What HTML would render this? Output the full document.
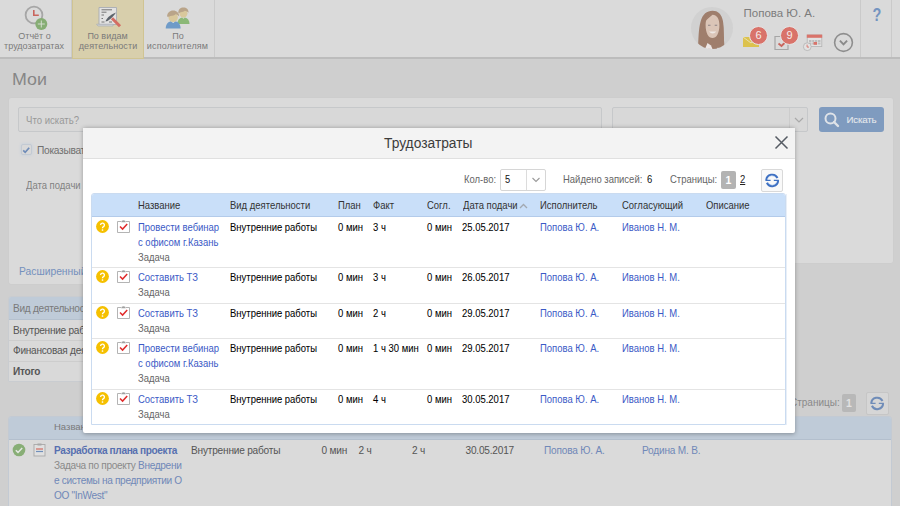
<!DOCTYPE html>
<html><head><meta charset="utf-8">
<style>
*{margin:0;padding:0;box-sizing:border-box}
html,body{width:900px;height:506px;overflow:hidden}
body{background:#cfcfcf;font-family:"Liberation Sans",sans-serif;position:relative;color:#555}
.a{position:absolute;white-space:nowrap}
/* toolbar */
#tb{position:absolute;left:0;top:0;width:900px;height:57px;background:#dadada;border-bottom:2px solid #bcbcbc;height:59px}
.tab{position:absolute;top:0;height:57px;text-align:center;font-size:9px;line-height:10px;color:#7a7a7a}
.sep{position:absolute;top:0;width:1px;height:57px;background:#cacaca}
/* search panel */
#sp{position:absolute;left:8px;top:97px;width:886px;height:167px;background:#dadada;border:1px solid #cdcdcd;border-radius:3px}
.inp{position:absolute;background:#d8d8d8;border:1px solid #c6c8ca;border-radius:2px}
/* left table */
.lt{position:absolute;left:8px;width:80px;border:1px solid #c9ccd0;background:#d9d9d9;border-radius:3px 3px 0 0}
/* modal */
#modal{position:absolute;left:83px;top:128px;width:712px;height:305px;background:#fff;box-shadow:0 0.5px 4px rgba(0,0,0,.3);border-radius:2px}
#mh{position:absolute;left:0;top:0;width:712px;height:31px;background:#f3f3f3;border-bottom:1px solid #e0e0e0}
.m{position:absolute;white-space:nowrap;font-size:10.2px;line-height:15px;transform:scaleX(0.93);transform-origin:0 0}
#tbl{position:absolute;left:8px;top:65px;width:695px;height:232px;border:1px solid #cadbf0;border-radius:3px 3px 0 0;overflow:hidden}
#th{position:absolute;left:0;top:0;width:693px;height:23px;background:#c9dff9;border-bottom:1px solid #b3cbea}
.row{position:absolute;left:0;width:692px;border-top:1px solid #e3e3e3}
.lnk{color:#3b5ac6}
.dk{color:#000;-webkit-text-stroke:0.05px #000}
.gr{color:#666}
</style></head><body>

<!-- ===== TOOLBAR ===== -->
<div id="tb">
  <div class="tab" style="left:0;width:71px">
    <svg class="a" style="left:22px;top:4px" width="28" height="28" viewBox="0 0 28 28">
      <circle cx="12" cy="11" r="8.4" fill="none" stroke="#a6a6a6" stroke-width="1.8"/>
      <path d="M11.8 6v5.2h5" fill="none" stroke="#c9655d" stroke-width="1.6"/>
      <circle cx="19.3" cy="20" r="6" fill="#86ad74"/>
      <path d="M19.3 16.5v7M15.8 20h7" stroke="#d4dccf" stroke-width="1"/>
    </svg>
    <div class="a" style="left:0;width:69px;top:31px;text-align:center">Отчёт о</div>
    <div class="a" style="left:0;width:68px;top:41px;text-align:center">трудозатратах</div>
  </div>
  <div class="sep" style="left:71px"></div>
  <div class="tab" style="left:72px;width:72px;height:59px;background:#d8cfac;border:1px solid #d0c492;border-top:none">
    <svg class="a" style="left:22px;top:3px" width="28" height="26" viewBox="0 0 28 26">
      <path d="M4 4.5h17.5v17H4z" fill="#e2e2e2" stroke="#a8adb4" stroke-width="0.9"/>
      <path d="M1.5 21.2h16.5v1.8H3z" fill="#d4d6d8" stroke="#a8adb4" stroke-width="0.7"/>
      <path d="M6.5 6.8h10.5M6.5 9.2h5M6.5 12h2.5M6.5 15.5h1.5M6.5 19h3M14 19h3" stroke="#6a6a6a" stroke-width="0.9"/>
      <path d="M10.5 18.5c1-3 4-6.5 10.5-9-1.5 2.5-4.5 6-8.5 8.5z" fill="#5c636b"/>
      <path d="M17 15.2l8 8" stroke="#d36d63" stroke-width="3"/>
    </svg>
    <div class="a" style="left:-1px;width:71px;top:31px;text-align:center">По видам</div>
    <div class="a" style="left:-0.5px;width:71px;top:41px;text-align:center;letter-spacing:0.1px">деятельности</div>
  </div>
  <div class="tab" style="left:144px;width:70px">
    <svg class="a" style="left:15px;top:2px" width="33" height="28" viewBox="0 0 35 30">
      <path d="M19.5 23.5c0-4 2-6.5 5-7h3c3 .5 5 3 5 7z" fill="#8bb877"/>
      <path d="M24.5 16.5l1.5 1.5 1.5-1.5z" fill="#e9e9e0"/>
      <ellipse cx="26" cy="12" rx="4.3" ry="4.6" fill="#d9c89c"/>
      <path d="M20.5 11.5c0-3.5 2.3-5.5 5.5-5.5s5.5 2 5.5 5.5c-1-1-2.5-1.8-4-2-.8 1-2.5 1.5-4.5 1.5-.8.5-1.5 1-2.5.5z" fill="#b9a489"/>
      <path d="M7 28.5c0-5 2.5-7.5 6-8h4c3.5.5 6 3 6 8z" fill="#6f9bc8"/>
      <path d="M12.5 20.5l2.5 2 2.5-2z" fill="#e9e9e0"/>
      <ellipse cx="15" cy="16.5" rx="5" ry="5" fill="#d9c89c"/>
      <path d="M8.5 15.5c0-4 2.8-6.5 6.5-6.5s6.5 2.5 6.5 6.5c-1-1.2-2.5-2-4-2.3-1 1.2-3 1.8-5.5 1.8-1 .6-2 1-3.5.5z" fill="#b9a489"/>
    </svg>
    <div class="a" style="left:-1px;width:70px;top:31px;text-align:center">По</div>
    <div class="a" style="left:-1.5px;width:70px;top:41px;text-align:center;letter-spacing:0.15px">исполнителям</div>
  </div>
  <div class="sep" style="left:214px"></div>

  <!-- user -->
  <div class="a" style="left:691px;top:7px;width:42px;height:42px;border-radius:50%;background:#d1d1d1;overflow:hidden">
    <svg width="42" height="42" viewBox="0 0 42 42">
      <path d="M7 41c.5-9 .5-19 2.5-26C11.5 7 16 3.8 21.5 3.8s9 3.2 10.5 10.5c1.5 8 .5 17 1.5 26.5z" fill="#9f7e6c"/>
      <path d="M13.5 36c3 1 5 5 3 7h10c-1-3 0-6 2-7z" fill="#9f7e6c"/>
      <path d="M14.6 18c0-6 2.8-10.2 7-10.2s6.8 4.2 6.8 10.2c0 8.5-3 13-6.9 13s-6.9-4.5-6.9-13z" fill="#dbc5b7"/>
      <path d="M14.4 14c1.5-4.5 4-6.5 7.5-6.5-2 1.5-4.5 3.5-7.5 6.5z" fill="#9f7e6c"/>
      <path d="M17 18.2h2.5M23.7 18.2h2.5" stroke="#8d8285" stroke-width="1.1"/>
      <path d="M18 24.5c2 2.5 5.5 2.5 7.2 0z" fill="#efe8e4"/>
      <path d="M14 42l2.5-6 3.5 2.5 1.5 3.5z" fill="#ece6e5"/>
    </svg>
  </div>
  <div class="a" style="left:743.5px;top:6px;font-size:11.5px;line-height:14px;color:#7c7c7c">Попова Ю. А.</div>
  <!-- envelope -->
  <svg class="a" style="left:742px;top:36px" width="18" height="12" viewBox="0 0 18 12">
    <rect x="1" y="1" width="16" height="10" fill="#dcc24e"/>
    <path d="M1 1l8 6 8-6" fill="none" stroke="#e9e0b0" stroke-width="1"/>
  </svg>
  <div class="a" style="left:749px;top:25.5px;width:19px;height:19px;border-radius:50%;background:#d9736a;border:1px solid #e6e6e6;color:#f5ecea;font-size:11px;line-height:17px;text-align:center">6</div>
  <!-- checklist -->
  <svg class="a" style="left:774px;top:35px" width="16" height="16" viewBox="0 0 16 16">
    <path d="M1 1.5h13v13H1z" fill="none" stroke="#a6a6a6" stroke-width="1.2"/>
    <path d="M4.5 8.5l3 2.5 3.5-3.5" fill="none" stroke="#c9655d" stroke-width="1.8"/>
  </svg>
  <div class="a" style="left:780px;top:25.5px;width:19px;height:19px;border-radius:50%;background:#d9736a;border:1px solid #e6e6e6;color:#f5ecea;font-size:11px;line-height:17px;text-align:center">9</div>
  <!-- calendar -->
  <svg class="a" style="left:802px;top:34px" width="22" height="18" viewBox="0 0 22 18">
    <rect x="5.2" y="1" width="14.6" height="11.6" fill="#e2e2e2" stroke="#b3b3b3" stroke-width="0.8"/>
    <rect x="4.8" y="0.6" width="15.4" height="3.2" fill="#d9736a"/>
    <path d="M7 7h11.5M7 9.5h11.5" stroke="#bdbdbd" stroke-width="1.8"/>
    <path d="M9.8 5.8v5M12.6 5.8v5M15.4 5.8v5" stroke="#e6e6e6" stroke-width="0.7"/>
    <rect x="11.6" y="8" width="3.4" height="2.8" fill="#d9736a"/>
    <circle cx="5.3" cy="12.7" r="3.9" fill="#e2e2e2" stroke="#b3b3b3" stroke-width="0.8"/>
    <path d="M5.1 10.6v2.5h1.9" stroke="#d9736a" stroke-width="0.9" fill="none"/>
  </svg>
  <!-- chevron circle -->
  <svg class="a" style="left:833px;top:32px" width="21" height="21" viewBox="0 0 21 21">
    <circle cx="10.5" cy="10.5" r="8.9" fill="none" stroke="#8e8e8e" stroke-width="1.6"/>
    <path d="M6.9 8.7l3.6 3.7 3.6-3.7" fill="none" stroke="#8a8a8a" stroke-width="1.9"/>
  </svg>
  <div class="sep" style="left:860px"></div>
  <div class="a" style="left:868.5px;top:4.5px;width:16px;text-align:center;font-size:18.5px;line-height:20px;font-weight:bold;color:#7494c0;transform:scaleX(0.78)">?</div>
  <div class="sep" style="left:891px"></div>
</div>

<!-- title -->
<div class="a" style="left:11.5px;top:69px;font-size:16.5px;line-height:20px;color:#868686;transform:scaleX(1.08);transform-origin:0 0">Мои</div>

<!-- search panel -->
<div id="sp"></div>
<div class="a" style="left:8px;top:250px;width:120px;height:35px;background:#dadada;border:1px solid #cdcdcd;border-top:none;border-right:none;border-radius:0 0 0 3px"></div>
<div class="inp" style="left:18px;top:107px;width:584px;height:25px"></div>
<div class="a" style="left:26px;top:115px;font-size:10.3px;line-height:12px;color:#989898;transform:scaleX(0.93);transform-origin:0 0">Что искать?</div>
<div class="inp" style="left:612px;top:107px;width:196px;height:25px"></div>
<div class="a" style="left:789px;top:108px;width:1px;height:23px;background:#cccccc"></div>
<svg class="a" style="left:793px;top:116px" width="12" height="8" viewBox="0 0 12 8"><path d="M2 2l4 4 4-4" fill="none" stroke="#a9a9a9" stroke-width="1.2"/></svg>
<div class="a" style="left:819px;top:107px;width:65px;height:25px;background:#7f9bbf;border-radius:3px"></div>
<svg class="a" style="left:823px;top:111px" width="18" height="18" viewBox="0 0 18 18"><circle cx="7.5" cy="7.5" r="5" fill="none" stroke="#dfe3e8" stroke-width="2"/><path d="M11 11l4 4" stroke="#dfe3e8" stroke-width="2.4" stroke-linecap="round"/></svg>
<div class="a" style="left:846.5px;top:113.5px;font-size:9.75px;line-height:12px;color:#e4e8ec;letter-spacing:-0.2px;-webkit-text-stroke:0.1px #e4e8ec">Искать</div>

<!-- checkbox -->
<div class="a" style="left:20.5px;top:143.5px;width:11.5px;height:11.5px;border:1px solid #c3cad3;border-radius:2px;background:#d9d9d9;box-shadow:0 0 2px 1px #cfd5dc"></div>
<svg class="a" style="left:21px;top:144.5px" width="10" height="10" viewBox="0 0 10 10"><path d="M2.2 5.3l2 2 4-4.6" fill="none" stroke="#6f8cb8" stroke-width="1.7"/></svg>
<div class="a" style="left:37px;top:144px;font-size:10.2px;line-height:13px;color:#707070;letter-spacing:-0.3px">Показывать</div>
<div class="a" style="left:26px;top:179.5px;font-size:10.2px;line-height:12px;color:#828282;transform:scaleX(0.93);transform-origin:0 0">Дата подачи</div>
<div class="a" style="left:19px;top:265px;font-size:10.3px;line-height:13px;color:#7490bd">Расширенный</div>

<!-- left summary table -->
<div class="lt" style="top:296px;height:86px"></div>
<div class="a" style="left:9px;top:297px;width:79px;height:23px;background:#bfcbd8;border-bottom:1px solid #b5c1ce;border-radius:2px 0 0 0"></div>
<div class="a" style="left:9px;top:340px;width:79px;height:1px;background:#cdcdcd"></div>
<div class="a" style="left:9px;top:361px;width:79px;height:1px;background:#cdcdcd"></div>
<div class="a" style="left:13px;top:302.5px;font-size:10.1px;letter-spacing:-0.27px;line-height:12px;color:#7a7a7a">Вид деятельности</div>
<div class="a" style="left:13px;top:325px;font-size:10.1px;letter-spacing:-0.27px;line-height:12px;color:#555">Внутренние работы</div>
<div class="a" style="left:13px;top:345px;font-size:10.1px;letter-spacing:-0.27px;line-height:12px;color:#555">Финансовая деятельность</div>
<div class="a" style="left:13px;top:365.5px;font-size:10.1px;letter-spacing:-0.27px;line-height:12px;color:#555;font-weight:bold">Итого</div>

<!-- right pager behind -->
<div class="a" style="left:790px;top:397px;font-size:10px;line-height:12px;color:#8a8a8a">Страницы:</div>
<div class="a" style="left:842px;top:393.5px;width:14px;height:18px;background:#b8b8b8;border-radius:2px;color:#e2e2e2;font-size:10.5px;line-height:18px;text-align:center;font-weight:bold">1</div>
<div class="a" style="left:866px;top:392px;width:23px;height:23px;border:1px solid #c6c6c6;border-radius:2px;background:#d6d6d6"></div>
<svg class="a" style="left:870px;top:396px" width="15" height="15" viewBox="0 0 15 15"><g fill="none"><path d="M1.3 7.4A5.9 5.9 0 0 1 12.5 5M13.1 7.4A5.9 5.9 0 0 1 1.9 9.8" stroke="#6f8cb8" stroke-width="2"/><path d="M0.5 7.4H5.6M13.9 7.4H8.8" stroke="#6f8cb8" stroke-width="1.4"/></g></svg>

<!-- bottom table -->
<div class="a" style="left:8px;top:416px;width:884px;height:100px;border:1px solid #c3cad3;background:#dadada;border-radius:3px 3px 0 0;overflow:hidden"><div class="a" style="left:0;top:0;width:882px;height:23px;background:#bfcbd8;border-bottom:1px solid #b3bfcd"></div></div>
<div class="a" style="left:54px;top:421px;font-size:9.5px;line-height:12px;color:#7a7a7a">Название</div>
<svg class="a" style="left:12px;top:443px" width="14" height="14" viewBox="0 0 14 14"><circle cx="7" cy="7" r="6.3" fill="#88ae76"/><path d="M3.8 7.2l2.2 2.2 4.2-4.4" fill="none" stroke="#e4e8e2" stroke-width="1.5"/></svg>
<svg class="a" style="left:33px;top:443px" width="14" height="14" viewBox="0 0 14 14"><rect x="1" y="1.5" width="11" height="11.5" fill="#e0e0e0" stroke="#a8a8a8" stroke-width="0.9"/><path d="M3 6h7" stroke="#d06a60" stroke-width="1.2"/><path d="M3 8.5h7" stroke="#6f8fbb" stroke-width="1.2"/><rect x="4.5" y="0.5" width="4" height="2" fill="#a8a8a8"/></svg>
<div class="a" style="left:54px;top:443px;font-size:10.1px;letter-spacing:-0.37px;line-height:15px;color:#5770b0;font-weight:bold">Разработка плана проекта</div>
<div class="a" style="left:54px;top:458px;font-size:10.1px;letter-spacing:-0.33px;line-height:15px;color:#8a8a8a">Задача по проекту <span style="color:#7088b8">Внедрени</span></div>
<div class="a" style="left:54px;top:473px;font-size:10.1px;letter-spacing:-0.33px;line-height:15px;color:#7088b8">е системы на предприятии О</div>
<div class="a" style="left:54px;top:488px;font-size:10.1px;letter-spacing:-0.33px;line-height:15px;color:#7088b8">ОО "InWest"</div>
<div class="a" style="left:191px;top:443px;font-size:10.1px;letter-spacing:-0.2px;line-height:15px;color:#555">Внутренние работы</div>
<div class="a" style="left:321.5px;top:443px;font-size:10.1px;letter-spacing:-0.2px;line-height:15px;color:#555">0 мин</div>
<div class="a" style="left:358.5px;top:443px;font-size:10.1px;letter-spacing:-0.2px;line-height:15px;color:#555">2 ч</div>
<div class="a" style="left:412px;top:443px;font-size:10.1px;letter-spacing:-0.2px;line-height:15px;color:#555">2 ч</div>
<div class="a" style="left:465.5px;top:443px;font-size:10.1px;letter-spacing:-0.2px;line-height:15px;color:#555">30.05.2017</div>
<div class="a" style="left:544px;top:443px;font-size:10.1px;letter-spacing:-0.2px;line-height:15px;color:#7088b8">Попова Ю. А.</div>
<div class="a" style="left:642px;top:443px;font-size:10.1px;letter-spacing:-0.2px;line-height:15px;color:#7088b8">Родина М. В.</div>

<!-- ===== MODAL ===== -->
<div id="modal">
  <div id="mh">
    <div class="a" style="left:301px;top:7px;font-size:13.8px;line-height:17px;color:#3c3c3c">Трудозатраты</div>
    <svg class="a" style="left:691px;top:6.5px" width="15" height="15" viewBox="0 0 15 15"><path d="M1.5 1.5l12 12M13.5 1.5l-12 12" stroke="#555b63" stroke-width="1.5"/></svg>
  </div>
  <!-- pager -->
  <div class="m" style="left:381px;top:44px;color:#666">Кол-во:</div>
  <div class="a" style="left:417px;top:41px;width:46px;height:22px;border:1px solid #d6d6d6;border-radius:2px;background:#fff"></div>
  <div class="a" style="left:443px;top:42px;width:1px;height:20px;background:#dcdcdc"></div>
  <svg class="a" style="left:448px;top:48px" width="10" height="8" viewBox="0 0 10 8"><path d="M1.5 2l3.5 3.5 3.5-3.5" fill="none" stroke="#9a9a9a" stroke-width="1.1"/></svg>
  <div class="m" style="left:421.5px;top:43.5px;font-size:10px;color:#111">5</div>
  <div class="m" style="left:479.5px;top:44px;color:#666">Найдено записей:</div>
  <div class="m" style="left:563.5px;top:44px;color:#111">6</div>
  <div class="m" style="left:587px;top:44px;color:#666">Страницы:</div>
  <div class="a" style="left:638px;top:42.5px;width:15px;height:18px;background:#b3b3b3;border-radius:2px;color:#fff;font-size:10.5px;line-height:18px;text-align:center;font-weight:bold">1</div>
  <div class="m" style="left:657px;top:44px;color:#222;text-decoration:underline">2</div>
  <div class="a" style="left:678px;top:41px;width:22px;height:23px;border:1px solid #d9d9d9;border-radius:2px;background:#f9f9f9"></div>
  <svg class="a" style="left:682px;top:45px" width="15" height="15" viewBox="0 0 15 15"><g fill="none"><path d="M1.3 7.4A5.9 5.9 0 0 1 12.5 5M13.1 7.4A5.9 5.9 0 0 1 1.9 9.8" stroke="#3e70c2" stroke-width="2"/><path d="M0.5 7.4H5.6M13.9 7.4H8.8" stroke="#3e70c2" stroke-width="1.4"/><path d="M2.4 6.4A4.8 4.8 0 0 1 11.3 5.3M11.9 8.6A4.8 4.8 0 0 1 3 9.4" stroke="#b9d0f0" stroke-width="0.6"/></g></svg>

  <div class="a" style="left:703px;top:66px;width:1px;height:231px;background:#e8eff8"></div>
  <div id="tbl">
    <div id="th">
      <div class="m" style="left:46px;top:4px;color:#333">Название</div>
      <div class="m" style="left:138px;top:4px;color:#333">Вид деятельности</div>
      <div class="m" style="left:246px;top:4px;color:#333">План</div>
      <div class="m" style="left:281px;top:4px;color:#333">Факт</div>
      <div class="m" style="left:335px;top:4px;color:#333">Согл.</div>
      <div class="m" style="left:371px;top:4px;color:#333">Дата подачи</div>
      <svg class="a" style="left:427px;top:9px" width="9" height="6" viewBox="0 0 9 6"><path d="M1 5l3.5-3.5 3.5 3.5" fill="none" stroke="#a2a8b0" stroke-width="1.3"/></svg>
      <div class="m" style="left:448px;top:4px;color:#333">Исполнитель</div>
      <div class="m" style="left:530px;top:4px;color:#333">Согласующий</div>
      <div class="m" style="left:614px;top:4px;color:#333">Описание</div>
    </div>
  </div>
<!--ROWS-->
<svg class="a" style="left:12.5px;top:92px" width="13" height="13" viewBox="0 0 13 13"><circle cx="6.5" cy="6.5" r="6.4" fill="#f5c000"/><path d="M4.6 5a1.9 1.9 0 1 1 2.6 1.8c-.6.3-.7.6-.7 1.4" fill="none" stroke="#fff" stroke-width="1.35"/><circle cx="6.5" cy="10" r=".85" fill="#fff"/></svg>
<svg class="a" style="left:34px;top:92.2px" width="13" height="13" viewBox="0 0 13 13"><path d="M.5 1.5h3.5M9 1.5h3.5v11H.5v-11" fill="none" stroke="#ababab" stroke-width="0.9"/><path d="M4.2 2.2a2.3 2 0 0 1 4.6 0z" fill="#a0a0a0"/><path d="M3 6.5l2.6 2.6 4.6-5" fill="none" stroke="#e02c2c" stroke-width="1.5"/></svg>
<div class="m lnk" style="left:54.5px;top:91.5px">Провести вебинар</div>
<div class="m lnk" style="left:54.5px;top:106.5px">с офисом г.Казань</div>
<div class="m gr" style="left:54.5px;top:121.5px">Задача</div>
<div class="m dk" style="left:147px;top:91.5px">Внутренние работы</div>
<div class="m dk" style="left:254.7px;top:91.5px">0 мин</div>
<div class="m dk" style="left:290.2px;top:91.5px">3 ч</div>
<div class="m dk" style="left:344.2px;top:91.5px">0 мин</div>
<div class="m dk" style="left:379.4px;top:91.5px">25.05.2017</div>
<div class="m lnk" style="left:457.1px;top:91.5px">Попова Ю. А.</div>
<div class="m lnk" style="left:538.9px;top:91.5px">Иванов Н. М.</div>
<div class="a" style="left:9px;top:139px;width:693px;height:1px;background:#e4e4e4"></div>
<svg class="a" style="left:12.5px;top:142px" width="13" height="13" viewBox="0 0 13 13"><circle cx="6.5" cy="6.5" r="6.4" fill="#f5c000"/><path d="M4.6 5a1.9 1.9 0 1 1 2.6 1.8c-.6.3-.7.6-.7 1.4" fill="none" stroke="#fff" stroke-width="1.35"/><circle cx="6.5" cy="10" r=".85" fill="#fff"/></svg>
<svg class="a" style="left:34px;top:142.2px" width="13" height="13" viewBox="0 0 13 13"><path d="M.5 1.5h3.5M9 1.5h3.5v11H.5v-11" fill="none" stroke="#ababab" stroke-width="0.9"/><path d="M4.2 2.2a2.3 2 0 0 1 4.6 0z" fill="#a0a0a0"/><path d="M3 6.5l2.6 2.6 4.6-5" fill="none" stroke="#e02c2c" stroke-width="1.5"/></svg>
<div class="m lnk" style="left:54.5px;top:141.5px">Составить ТЗ</div>
<div class="m gr" style="left:54.5px;top:156.5px">Задача</div>
<div class="m dk" style="left:147px;top:141.5px">Внутренние работы</div>
<div class="m dk" style="left:254.7px;top:141.5px">0 мин</div>
<div class="m dk" style="left:290.2px;top:141.5px">3 ч</div>
<div class="m dk" style="left:344.2px;top:141.5px">0 мин</div>
<div class="m dk" style="left:379.4px;top:141.5px">26.05.2017</div>
<div class="m lnk" style="left:457.1px;top:141.5px">Попова Ю. А.</div>
<div class="m lnk" style="left:538.9px;top:141.5px">Иванов Н. М.</div>
<div class="a" style="left:9px;top:175px;width:693px;height:1px;background:#e4e4e4"></div>
<svg class="a" style="left:12.5px;top:178px" width="13" height="13" viewBox="0 0 13 13"><circle cx="6.5" cy="6.5" r="6.4" fill="#f5c000"/><path d="M4.6 5a1.9 1.9 0 1 1 2.6 1.8c-.6.3-.7.6-.7 1.4" fill="none" stroke="#fff" stroke-width="1.35"/><circle cx="6.5" cy="10" r=".85" fill="#fff"/></svg>
<svg class="a" style="left:34px;top:178.2px" width="13" height="13" viewBox="0 0 13 13"><path d="M.5 1.5h3.5M9 1.5h3.5v11H.5v-11" fill="none" stroke="#ababab" stroke-width="0.9"/><path d="M4.2 2.2a2.3 2 0 0 1 4.6 0z" fill="#a0a0a0"/><path d="M3 6.5l2.6 2.6 4.6-5" fill="none" stroke="#e02c2c" stroke-width="1.5"/></svg>
<div class="m lnk" style="left:54.5px;top:177.5px">Составить ТЗ</div>
<div class="m gr" style="left:54.5px;top:192.5px">Задача</div>
<div class="m dk" style="left:147px;top:177.5px">Внутренние работы</div>
<div class="m dk" style="left:254.7px;top:177.5px">0 мин</div>
<div class="m dk" style="left:290.2px;top:177.5px">2 ч</div>
<div class="m dk" style="left:344.2px;top:177.5px">0 мин</div>
<div class="m dk" style="left:379.4px;top:177.5px">29.05.2017</div>
<div class="m lnk" style="left:457.1px;top:177.5px">Попова Ю. А.</div>
<div class="m lnk" style="left:538.9px;top:177.5px">Иванов Н. М.</div>
<div class="a" style="left:9px;top:210px;width:693px;height:1px;background:#e4e4e4"></div>
<svg class="a" style="left:12.5px;top:213px" width="13" height="13" viewBox="0 0 13 13"><circle cx="6.5" cy="6.5" r="6.4" fill="#f5c000"/><path d="M4.6 5a1.9 1.9 0 1 1 2.6 1.8c-.6.3-.7.6-.7 1.4" fill="none" stroke="#fff" stroke-width="1.35"/><circle cx="6.5" cy="10" r=".85" fill="#fff"/></svg>
<svg class="a" style="left:34px;top:213.2px" width="13" height="13" viewBox="0 0 13 13"><path d="M.5 1.5h3.5M9 1.5h3.5v11H.5v-11" fill="none" stroke="#ababab" stroke-width="0.9"/><path d="M4.2 2.2a2.3 2 0 0 1 4.6 0z" fill="#a0a0a0"/><path d="M3 6.5l2.6 2.6 4.6-5" fill="none" stroke="#e02c2c" stroke-width="1.5"/></svg>
<div class="m lnk" style="left:54.5px;top:212.5px">Провести вебинар</div>
<div class="m lnk" style="left:54.5px;top:227.5px">с офисом г.Казань</div>
<div class="m gr" style="left:54.5px;top:242.5px">Задача</div>
<div class="m dk" style="left:147px;top:212.5px">Внутренние работы</div>
<div class="m dk" style="left:254.7px;top:212.5px">0 мин</div>
<div class="m dk" style="left:290.2px;top:212.5px">1 ч 30 мин</div>
<div class="m dk" style="left:344.2px;top:212.5px">0 мин</div>
<div class="m dk" style="left:379.4px;top:212.5px">29.05.2017</div>
<div class="m lnk" style="left:457.1px;top:212.5px">Попова Ю. А.</div>
<div class="m lnk" style="left:538.9px;top:212.5px">Иванов Н. М.</div>
<div class="a" style="left:9px;top:261px;width:693px;height:1px;background:#e4e4e4"></div>
<svg class="a" style="left:12.5px;top:264px" width="13" height="13" viewBox="0 0 13 13"><circle cx="6.5" cy="6.5" r="6.4" fill="#f5c000"/><path d="M4.6 5a1.9 1.9 0 1 1 2.6 1.8c-.6.3-.7.6-.7 1.4" fill="none" stroke="#fff" stroke-width="1.35"/><circle cx="6.5" cy="10" r=".85" fill="#fff"/></svg>
<svg class="a" style="left:34px;top:264.2px" width="13" height="13" viewBox="0 0 13 13"><path d="M.5 1.5h3.5M9 1.5h3.5v11H.5v-11" fill="none" stroke="#ababab" stroke-width="0.9"/><path d="M4.2 2.2a2.3 2 0 0 1 4.6 0z" fill="#a0a0a0"/><path d="M3 6.5l2.6 2.6 4.6-5" fill="none" stroke="#e02c2c" stroke-width="1.5"/></svg>
<div class="m lnk" style="left:54.5px;top:263.5px">Составить ТЗ</div>
<div class="m gr" style="left:54.5px;top:278.5px">Задача</div>
<div class="m dk" style="left:147px;top:263.5px">Внутренние работы</div>
<div class="m dk" style="left:254.7px;top:263.5px">0 мин</div>
<div class="m dk" style="left:290.2px;top:263.5px">4 ч</div>
<div class="m dk" style="left:344.2px;top:263.5px">0 мин</div>
<div class="m dk" style="left:379.4px;top:263.5px">30.05.2017</div>
<div class="m lnk" style="left:457.1px;top:263.5px">Попова Ю. А.</div>
<div class="m lnk" style="left:538.9px;top:263.5px">Иванов Н. М.</div>
<!--/ROWS-->
</div>

</body></html>
